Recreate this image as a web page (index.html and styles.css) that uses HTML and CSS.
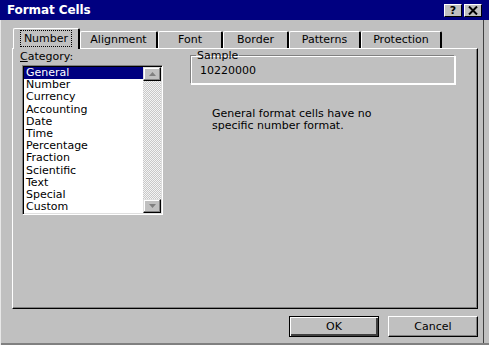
FILE: index.html
```html
<!DOCTYPE html>
<html>
<head>
<meta charset="utf-8">
<link rel="stylesheet" href="styles.css">
</head>
<body>
<div class="dialog">
  <div class="titlebar">
    <span class="title">Format Cells</span>
    <div class="tbtns">
      <span class="tbtn help">?</span>
      <span class="tbtn close">
        <svg width="10" height="9" viewBox="0 0 10 9"><path d="M1 0.5 L9 8.5 M9 0.5 L1 8.5" stroke="#000" stroke-width="2"/></svg>
      </span>
    </div>
  </div>
  <div class="client">
    <div class="tabs">
      <div class="tab active w-number"><span class="focus">Number</span></div>
      <div class="tab w-align">Alignment</div>
      <div class="tab w-font">Font</div>
      <div class="tab w-border">Border</div>
      <div class="tab w-patterns">Patterns</div>
      <div class="tab w-protect">Protection</div>
    </div>
    <div class="panel">
      <div class="leftcol">
        <div class="label"><u>C</u>ategory:</div>
        <div class="listbox">
          <ul class="items">
            <li class="sel">General</li>
            <li>Number</li>
            <li>Currency</li>
            <li>Accounting</li>
            <li>Date</li>
            <li>Time</li>
            <li>Percentage</li>
            <li>Fraction</li>
            <li>Scientific</li>
            <li>Text</li>
            <li>Special</li>
            <li>Custom</li>
          </ul>
          <div class="vscroll">
            <div class="sbtn"><svg width="7" height="4" viewBox="0 0 7 4"><path d="M3.5 0 L7 4 L0 4 Z" fill="#808080"/></svg></div>
            <div class="track"></div>
            <div class="sbtn"><svg width="7" height="4" viewBox="0 0 7 4"><path d="M0 0 L7 0 L3.5 4 Z" fill="#808080"/></svg></div>
          </div>
        </div>
      </div>
      <div class="rightcol">
        <fieldset class="sample">
          <legend>Sample</legend>
          <div class="sampleval">10220000</div>
        </fieldset>
        <p class="desc">General format cells have no<br>specific number format.</p>
      </div>
    </div>
    <div class="buttons">
      <div class="btn default"><span>OK</span></div>
      <div class="btn">Cancel</div>
    </div>
  </div>
</div>
</body>
</html>
```

FILE: styles.css
```css
html, body {
  margin: 0;
  padding: 0;
  background: #c0c0c0;
}
body {
  font-family: "DejaVu Sans", Verdana, sans-serif;
  font-size: 11px;
  color: #000;
}
.dialog {
  width: 489px;
  height: 345px;
  background: #c0c0c0;
  display: flex;
  flex-direction: column;
  overflow: hidden;
  box-shadow: inset 1px 0 0 #e8e8e8, inset 0 -2px 0 #808080;
}
.titlebar {
  height: 20px;
  background: #000080;
  display: flex;
  align-items: center;
  justify-content: space-between;
  padding: 0 7px 0 7px;
  flex: none;
}
.title {
  color: #fff;
  font-weight: bold;
  font-size: 12px;
  letter-spacing: -0.1px;
}
.tbtns {
  display: flex;
  gap: 2px;
  margin-top: 1px;
}
.tbtn {
  width: 18px;
  height: 13px;
  box-sizing: border-box;
  background: #c0c0c0;
  border-top: 1px solid #fff;
  border-left: 1px solid #fff;
  border-right: 1px solid #000;
  border-bottom: 1px solid #000;
  display: flex;
  align-items: center;
  justify-content: center;
  font-weight: bold;
  font-size: 11px;
  line-height: 1;
}
.client {
  flex: 1;
  display: flex;
  flex-direction: column;
  padding: 8px 0 0 12px;
  margin-right: 5px;
  margin-bottom: 2px;
  border-right: 1px solid #404040;
}
.tabs {
  display: flex;
  align-items: flex-end;
  height: 20px;
  padding-left: 1px;
}
.tab {
  height: 17px;
  box-sizing: border-box;
  border-top: 1px solid #fff;
  border-left: 1px solid #fff;
  border-right: 2px solid #000;
  border-radius: 2px 2px 0 0;
  display: flex;
  align-items: center;
  justify-content: center;
  padding-bottom: 1px;
}
.tab.active {
  height: 21px;
  margin-bottom: -1px;
  background: #c0c0c0;
  position: relative;
  z-index: 1;
  padding-bottom: 2px;
}
.focus {
  outline: 1px dotted #000;
  outline-offset: 1px;
  padding: 0 2px;
}
.w-number { width: 67px; }
.w-align { width: 78px; }
.w-font { width: 65px; }
.w-border { width: 66px; }
.w-patterns { width: 72px; }
.w-protect { width: 81px; }

.panel {
  width: 466px;
  height: 261px;
  box-sizing: border-box;
  border-top: 1px solid #fff;
  border-left: 1px solid #fff;
  border-right: 1px solid #000;
  border-bottom: 1px solid #000;
  box-shadow: inset -1px -1px 0 #808080;
  display: flex;
  padding: 1px 0 0 7px;
}
.leftcol {
  width: 143px;
  flex: none;
}
.label {
  height: 13px;
  line-height: 13px;
}
.listbox {
  margin: 2px 0 0 2px;
  width: 141px;
  height: 150px;
  box-sizing: border-box;
  border-top: 1px solid #808080;
  border-left: 1px solid #808080;
  border-right: 1px solid #fff;
  border-bottom: 1px solid #fff;
  box-shadow: inset 1px 1px 0 #000, inset -1px -1px 0 #dfdfdf;
  background: #fff;
  display: flex;
  padding: 1px 1px 0 1px;
}
.items {
  list-style: none;
  margin: 0;
  padding: 0;
  flex: 1;
  overflow: hidden;
}
.items li {
  height: 12.2px;
  line-height: 12.2px;
  padding-left: 2px;
  white-space: nowrap;
}
.items li.sel {
  background: #000080;
  color: #fff;
}
.vscroll {
  width: 18px;
  display: flex;
  flex-direction: column;
  padding-bottom: 1px;
}
.sbtn {
  height: 14px;
  box-sizing: border-box;
  background: #c0c0c0;
  border-top: 1px solid #dfdfdf;
  border-left: 1px solid #dfdfdf;
  border-right: 1px solid #000;
  border-bottom: 1px solid #000;
  box-shadow: inset -1px -1px 0 #808080, inset 1px 1px 0 #fff;
  display: flex;
  align-items: center;
  justify-content: center;
}
.track {
  flex: 1;
  background: repeating-conic-gradient(#c8c8c8 0 25%, #f4f4f4 0 50%) 0 0 / 2px 2px;
}
.rightcol {
  flex: 1;
  padding-left: 27px;
}
.sample {
  margin: -1px 0 0 0;
  width: 265px;
  height: 35px;
  box-sizing: border-box;
  padding: 0 0 0 9px;
  border-color: #808080 #fff #fff #808080;
  border-style: solid;
  border-width: 1px;
  box-shadow: 1px 1px 0 #fff inset, 1px 1px 0 #fff;
}
.sample legend {
  padding: 0 1px;
  margin-left: -4px;
  line-height: 13px;
}
.sampleval {
  line-height: 12px;
  margin-top: 3px;
}
.desc {
  margin: 24px 0 0 22px;
  line-height: 12px;
}
.buttons {
  display: flex;
  justify-content: flex-end;
  gap: 9px;
  width: 466px;
  margin-top: 7px;
}
.btn {
  width: 90px;
  height: 21px;
  box-sizing: border-box;
  border-top: 1px solid #fff;
  border-left: 1px solid #fff;
  border-right: 1px solid #000;
  border-bottom: 1px solid #000;
  box-shadow: inset -1px -1px 0 #808080;
  display: flex;
  align-items: center;
  justify-content: center;
}
.btn.default {
  border: 1px solid #000;
  box-shadow: inset 1px 1px 0 #fff, inset -2px -2px 0 #404040;
}
```
